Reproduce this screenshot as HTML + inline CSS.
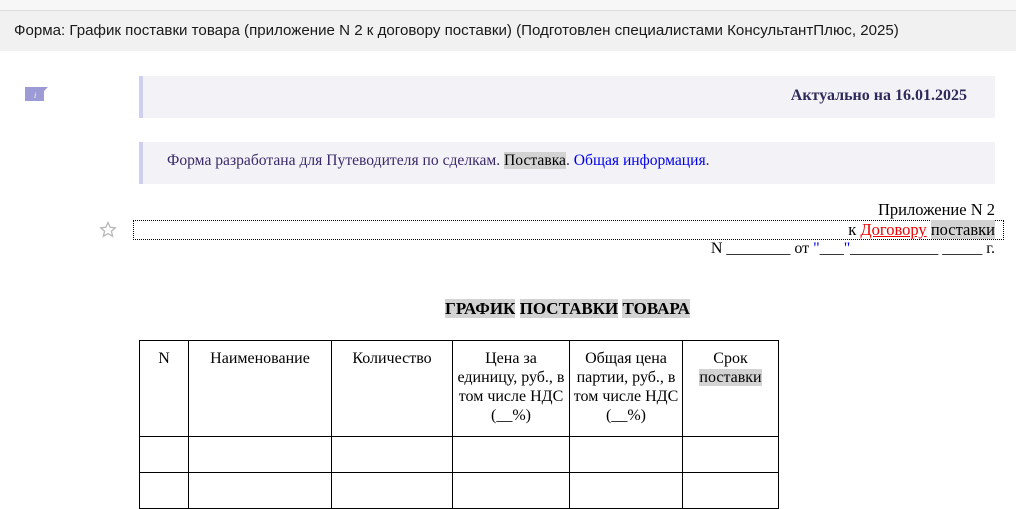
<!DOCTYPE html>
<html><head><meta charset="utf-8"><style>
body{margin:0;width:1016px;height:491px;overflow:hidden;background:#fff;position:relative;font-family:"Liberation Serif",serif;font-size:16.5px;color:#000}
.a{position:absolute;white-space:nowrap}
.hl{background:#d3d3d3}
table{white-space:normal}
td{border:1px solid #000;vertical-align:top;text-align:center;padding:8px 1px 0;line-height:19px;font-size:16px;white-space:normal}
</style></head><body>
<div class="a" style="left:0;top:0;width:1016px;height:10px;background:#f7f7f7;border-bottom:1px solid #dcdcdc"></div>
<div class="a" style="left:0;top:11px;width:1016px;height:40px;background:#f1f1f1"></div>
<div class="a" style="left:14px;top:22px;font-family:'Liberation Sans',sans-serif;font-size:15.1px;color:#1a1a1a">Форма: График поставки товара (приложение N 2 к договору поставки) (Подготовлен специалистами КонсультантПлюс, 2025)</div>
<svg class="a" style="left:25px;top:87px" width="24" height="16"><path d="M0 0H23L19 4V14H0Z" fill="#9d9bd6"/><text x="9" y="11" font-size="8" fill="#fff" font-family="Liberation Serif" font-style="italic">i</text></svg>
<div class="a" style="left:139px;top:76px;width:852px;height:42px;background:#f3f3f7;border-left:4px solid #cfd0ef"></div>
<div class="a" style="right:49px;top:87px;font-weight:bold;color:#2f2a5a;font-size:16px">Актуально на 16.01.2025</div>
<div class="a" style="left:139px;top:142px;width:852px;height:42px;background:#f3f3f7;border-left:4px solid #cfd0ef"></div>
<div class="a" style="left:167px;top:152px;color:#3a2a6a;font-size:15.6px">Форма разработана для Путеводителя по сделкам. <span class="hl" style="color:#000">Поставка</span>. <span style="color:#0000ee">Общая информация</span>.</div>
<div class="a" style="right:21px;top:200px">Приложение N 2</div>
<div class="a" style="left:133px;top:220px;width:869px;height:18px;border:1px dotted #000"></div>
<svg class="a" style="left:99px;top:221px" width="18" height="17"><path d="M9 1.5L11.2 6.3 16.3 6.8 12.4 10.2 13.6 15.3 9 12.6 4.4 15.3 5.6 10.2 1.7 6.8 6.8 6.3Z" fill="none" stroke="#b8b8b8" stroke-width="1.3"/></svg>
<div class="a" style="right:21px;top:220px">к <span style="color:#e00;text-decoration:underline">Договору</span> <span class="hl">поставки</span></div>
<div class="a" style="right:21px;top:240px;font-size:16px">N ________ от <span style="color:#0000ee">"</span>___<span style="color:#0000ee">"</span>___________ _____ г.</div>
<div class="a" style="left:445px;top:299px;font-weight:bold;font-size:17px"><span class="hl">ГРАФИК</span> <span class="hl">ПОСТАВКИ</span> <span class="hl">ТОВАРА</span></div>
<table style="position:absolute;left:139px;top:340px;border-collapse:collapse;table-layout:fixed;width:639px">
<colgroup><col style="width:49px"><col style="width:143px"><col style="width:121px"><col style="width:117px"><col style="width:113px"><col style="width:96px"></colgroup>
<tr style="height:96px"><td>N</td><td>Наименование</td><td>Количество</td><td>Цена за единицу, руб., в том числе НДС (__%)</td><td>Общая цена партии, руб., в том числе НДС (__%)</td><td>Срок <span class="hl">поставки</span></td></tr>
<tr style="height:36px"><td></td><td></td><td></td><td></td><td></td><td></td></tr>
<tr style="height:36px"><td></td><td></td><td></td><td></td><td></td><td></td></tr>
</table>
</body></html>
